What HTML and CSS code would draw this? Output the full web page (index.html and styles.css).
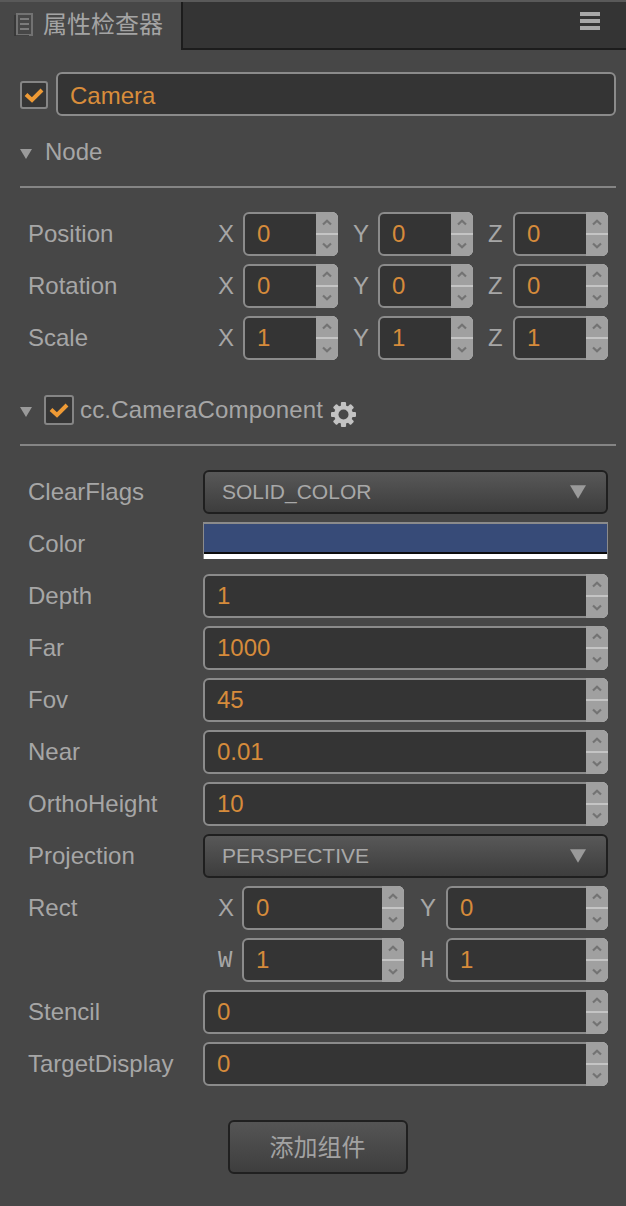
FILE: index.html
```html
<!DOCTYPE html>
<html lang="zh">
<head>
<meta charset="utf-8">
<title>属性检查器</title>
<link rel="stylesheet" href="styles.css">
</head>
<body>
<svg class="defs" width="0" height="0" aria-hidden="true">
  <symbol id="up" viewBox="0 0 10 7"><path d="M1 5.500 5 1.700l4 3.800" fill="none" stroke="#737373" stroke-width="2.200"/></symbol>
  <symbol id="down" viewBox="0 0 10 7"><path d="M1 1.500 5 5.300l4-3.800" fill="none" stroke="#737373" stroke-width="2.200"/></symbol>
  <symbol id="check" viewBox="0 0 20 16"><path d="M2 7.500 8 13 18 3" fill="none" stroke="#ee9a35" stroke-width="4"/></symbol>
  <symbol id="tri" viewBox="0 0 12 10"><path d="M0 0h12L6 10z" fill="#9a9a9a"/></symbol>
</svg>
<div class="panel">
  <header class="tabbar">
    <div class="tab">
      <svg class="tab-icon" viewBox="0 0 20 24"><path d="M3 2h15v21H3z" fill="none" stroke="#727272" stroke-width="2"/><path d="M1 3v21h14" fill="none" stroke="#353535" stroke-width="1.500"/><path d="M6 7h9M6 12h9M6 17h9" stroke="#7b7b7b" stroke-width="2"/></svg>
      <span>属性检查器</span>
    </div>
    <div class="tab-rest">
      <div class="menu"><i></i><i></i><i></i></div>
    </div>
  </header>

  <main class="content">
    <div class="name-row">
      <span class="check"><svg><use href="#check"/></svg></span>
      <div class="name-input">Camera</div>
    </div>

    <div class="section section-node">
      <svg class="fold"><use href="#tri"/></svg>
      <span class="section-title">Node</span>
    </div>

    <div class="rows">
      <div class="row"><div class="label">Position</div><div class="vec3">
        <div class="axis"><span class="axis-name">X</span><div class="num"><span class="val">0</span><div class="spin"><b><svg><use href="#up"/></svg></b><b><svg><use href="#down"/></svg></b></div></div></div>
        <div class="axis"><span class="axis-name">Y</span><div class="num"><span class="val">0</span><div class="spin"><b><svg><use href="#up"/></svg></b><b><svg><use href="#down"/></svg></b></div></div></div>
        <div class="axis"><span class="axis-name">Z</span><div class="num"><span class="val">0</span><div class="spin"><b><svg><use href="#up"/></svg></b><b><svg><use href="#down"/></svg></b></div></div></div>
      </div></div>
      <div class="row"><div class="label">Rotation</div><div class="vec3">
        <div class="axis"><span class="axis-name">X</span><div class="num"><span class="val">0</span><div class="spin"><b><svg><use href="#up"/></svg></b><b><svg><use href="#down"/></svg></b></div></div></div>
        <div class="axis"><span class="axis-name">Y</span><div class="num"><span class="val">0</span><div class="spin"><b><svg><use href="#up"/></svg></b><b><svg><use href="#down"/></svg></b></div></div></div>
        <div class="axis"><span class="axis-name">Z</span><div class="num"><span class="val">0</span><div class="spin"><b><svg><use href="#up"/></svg></b><b><svg><use href="#down"/></svg></b></div></div></div>
      </div></div>
      <div class="row"><div class="label">Scale</div><div class="vec3">
        <div class="axis"><span class="axis-name">X</span><div class="num"><span class="val">1</span><div class="spin"><b><svg><use href="#up"/></svg></b><b><svg><use href="#down"/></svg></b></div></div></div>
        <div class="axis"><span class="axis-name">Y</span><div class="num"><span class="val">1</span><div class="spin"><b><svg><use href="#up"/></svg></b><b><svg><use href="#down"/></svg></b></div></div></div>
        <div class="axis"><span class="axis-name">Z</span><div class="num"><span class="val">1</span><div class="spin"><b><svg><use href="#up"/></svg></b><b><svg><use href="#down"/></svg></b></div></div></div>
      </div></div>
    </div>

    <div class="section section-comp">
      <svg class="fold"><use href="#tri"/></svg>
      <span class="check check-comp"><svg><use href="#check"/></svg></span>
      <span class="comp-title">cc.CameraComponent</span>
      <svg class="gear" viewBox="0 0 24 24">
        <g fill="#c2c2c2">
          <rect x="9.500" y="0" width="5" height="24" rx="1"/>
          <rect x="9.500" y="0" width="5" height="24" rx="1" transform="rotate(45 12 12)"/>
          <rect x="9.500" y="0" width="5" height="24" rx="1" transform="rotate(90 12 12)"/>
          <rect x="9.500" y="0" width="5" height="24" rx="1" transform="rotate(135 12 12)"/>
          <circle cx="12" cy="12" r="9"/>
        </g>
        <circle cx="12" cy="12" r="4.800" fill="#474747"/>
      </svg>
    </div>

    <div class="rows">
      <div class="row"><div class="label">ClearFlags</div><div class="select"><span>SOLID_COLOR</span><svg class="select-arrow"><use href="#tri"/></svg></div></div>
      <div class="row"><div class="label">Color</div><div class="color"><div class="color-fill"></div><div class="color-alpha"></div></div></div>
      <div class="row"><div class="label">Depth</div><div class="num"><span class="val">1</span><div class="spin"><b><svg><use href="#up"/></svg></b><b><svg><use href="#down"/></svg></b></div></div></div>
      <div class="row"><div class="label">Far</div><div class="num"><span class="val">1000</span><div class="spin"><b><svg><use href="#up"/></svg></b><b><svg><use href="#down"/></svg></b></div></div></div>
      <div class="row"><div class="label">Fov</div><div class="num"><span class="val">45</span><div class="spin"><b><svg><use href="#up"/></svg></b><b><svg><use href="#down"/></svg></b></div></div></div>
      <div class="row"><div class="label">Near</div><div class="num"><span class="val">0.01</span><div class="spin"><b><svg><use href="#up"/></svg></b><b><svg><use href="#down"/></svg></b></div></div></div>
      <div class="row"><div class="label">OrthoHeight</div><div class="num"><span class="val">10</span><div class="spin"><b><svg><use href="#up"/></svg></b><b><svg><use href="#down"/></svg></b></div></div></div>
      <div class="row"><div class="label">Projection</div><div class="select"><span>PERSPECTIVE</span><svg class="select-arrow"><use href="#tri"/></svg></div></div>
      <div class="row row-rect"><div class="label">Rect</div><div class="rect">
        <div class="axis"><span class="axis-name">X</span><div class="num"><span class="val">0</span><div class="spin"><b><svg><use href="#up"/></svg></b><b><svg><use href="#down"/></svg></b></div></div></div>
        <div class="axis"><span class="axis-name">Y</span><div class="num"><span class="val">0</span><div class="spin"><b><svg><use href="#up"/></svg></b><b><svg><use href="#down"/></svg></b></div></div></div>
        <div class="axis"><span class="axis-name mono">W</span><div class="num"><span class="val">1</span><div class="spin"><b><svg><use href="#up"/></svg></b><b><svg><use href="#down"/></svg></b></div></div></div>
        <div class="axis"><span class="axis-name mono">H</span><div class="num"><span class="val">1</span><div class="spin"><b><svg><use href="#up"/></svg></b><b><svg><use href="#down"/></svg></b></div></div></div>
      </div></div>
      <div class="row"><div class="label">Stencil</div><div class="num"><span class="val">0</span><div class="spin"><b><svg><use href="#up"/></svg></b><b><svg><use href="#down"/></svg></b></div></div></div>
      <div class="row"><div class="label">TargetDisplay</div><div class="num"><span class="val">0</span><div class="spin"><b><svg><use href="#up"/></svg></b><b><svg><use href="#down"/></svg></b></div></div></div>
    </div>

    <div class="actions"><div class="add-btn">添加组件</div></div>
  </main>
</div>
</body>
</html>
```

FILE: styles.css
```css
* { box-sizing: border-box; }
html, body { margin: 0; height: 100%; }
body {
  background: #474747;
  color: #a6a6a6;
  font-family: "Liberation Sans", "Noto Sans CJK SC", sans-serif;
  font-size: 24px;
  overflow: hidden;
}
.defs { position: absolute; }
.panel { width: 626px; height: 1206px; display: flex; flex-direction: column; }

/* tab bar */
.tabbar { display: flex; height: 50px; flex: none; border-top: 2px solid #595959; }
.tab {
  width: 181px; display: flex; align-items: center; gap: 9px;
  padding: 0 0 2px 14px; color: #a4a4a4; line-height: 1;
}
.tab-icon { width: 20px; height: 24px; flex: none; margin-bottom: 2px; }
.tab-rest {
  flex: 1; background: #343434;
  border-left: 2px solid #1c1c1c; border-bottom: 2px solid #1c1c1c;
  display: flex; justify-content: flex-end; padding: 10px 26px 0 0;
}
.menu { width: 20px; display: flex; flex-direction: column; gap: 3px; }
.menu i { display: block; height: 4px; background: #a8a8a8; }

.content { padding: 22px 10px 0 20px; flex: 1; }

/* name */
.name-row { display: flex; align-items: center; gap: 8px; height: 44px; }
.check {
  width: 28px; height: 28px; flex: none; margin-top: 2px;
  border: 2px solid #858585; border-radius: 3px; background: #363636;
  display: flex; align-items: center; justify-content: center;
}
.check svg { width: 20px; height: 16px; display: block; }
.check-comp { margin: 0; width: 30px; height: 30px; }
.name-input {
  flex: 1; height: 44px; line-height: 43px; padding-left: 12px;
  border: 2px solid #8b8b8b; border-radius: 6px; background: #343434; color: #d98d3b;
}

/* sections */
.section { display: flex; align-items: center; border-bottom: 2px solid #858585; }
.section-node { height: 72px; padding: 14px 0 12px; margin-bottom: 24px; }
.section-comp { height: 50px; margin-top: 36px; padding-bottom: 20px; margin-bottom: 24px; }
.fold { width: 12px; height: 10px; flex: none; margin-top: 4px; }
.section-title { margin-left: 13px; line-height: 1; }
.section-comp .check-comp { margin-left: 12px; }
.comp-title { margin-left: 6px; line-height: 1; letter-spacing: 0.17px; }
.gear { width: 25px; height: 25px; flex: none; margin: 8px 0 0 8px; }

/* rows */
.rows { display: flex; flex-direction: column; gap: 8px; }
.row { display: flex; align-items: flex-start; min-height: 44px; padding-left: 8px; }
.label { width: 175px; flex: none; line-height: 44px; white-space: nowrap; }
.row > .num, .row > .select, .row > .color { width: 405px; }

.vec3 { width: 405px; display: grid; grid-template-columns: repeat(3, 135px); }
.rect { width: 405px; display: grid; grid-template-columns: 201px 204px; row-gap: 8px; }
.axis { display: flex; align-items: center; justify-content: flex-end; }
.axis-name { flex: 1; text-align: left; padding-left: 15px; }
.rect .axis:nth-child(even) .axis-name { padding-left: 16px; }
.axis .num { flex: none; width: 95px; }
.rect .axis .num { width: 162px; }
.mono { font-family: "Liberation Mono", monospace; }

.num {
  height: 44px; display: flex;
  border: 2px solid #8b8b8b; border-radius: 6px; background: #343434;
}
.val { flex: 1; line-height: 40px; padding-left: 12px; color: #d68b3b; }
.spin {
  width: 22px; flex: none; margin: -2px -2px -2px 0; overflow: hidden;
  display: flex; flex-direction: column; gap: 2px;
  background: #c4c4c4; border-radius: 0 6px 6px 0;
}
.spin b { flex: 1; background: #a0a0a0; display: flex; align-items: center; justify-content: center; }
.spin svg { width: 10px; height: 7px; display: block; }

.select {
  height: 44px; display: flex; align-items: center; justify-content: space-between;
  padding: 0 20px 0 17px; font-size: 21px; color: #a8a8a8;
  border: 2px solid #1f1f1f; border-radius: 6px;
  background: linear-gradient(#585858, #3d3d3d);
}
.select-arrow { width: 16px; height: 14px; flex: none; }

.color { height: 37px; border-top: 2px solid #8b8b8b; display: flex; flex-direction: column; border-left: 1px solid #8b8b8b; border-right: 1px solid #8b8b8b; }
.color-fill { flex: 1; background: #374b78; border-bottom: 2px solid #0c0c0c; }
.color-alpha { height: 5px; background: #fff; }

.actions { display: flex; justify-content: center; margin-top: 34px; }
.add-btn {
  width: 180px; height: 54px; line-height: 52px; text-align: center; color: #a2a2a2;
  border: 2px solid #202020; border-radius: 6px;
  background: linear-gradient(#555555, #3e3e3e);
  margin-right: 1px;
}
```
